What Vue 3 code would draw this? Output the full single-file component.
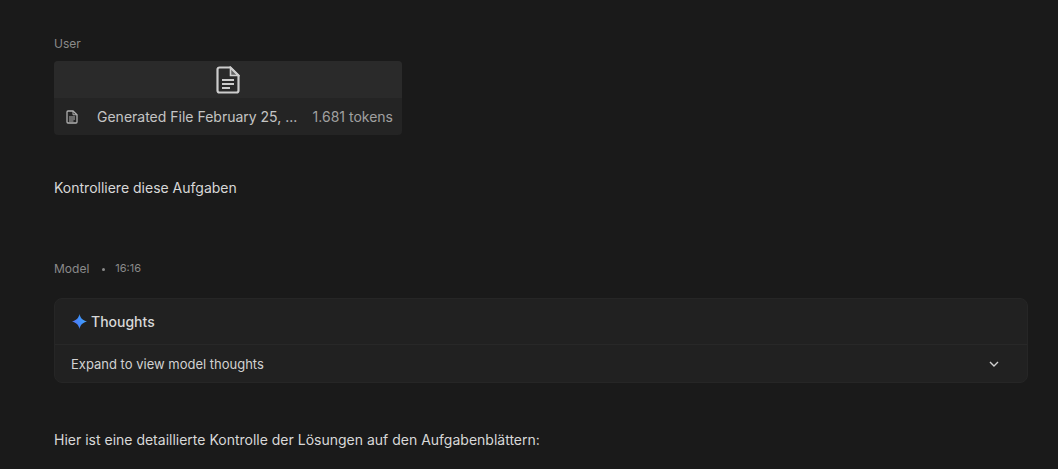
<template>
  <div class="page">
    <section class="turn user-turn">
      <div class="author"><span>User</span></div>
      <div class="file-card">
        <div class="file-preview">
          <svg class="doc-large" viewBox="0 0 24 28" fill="none" stroke="currentColor" stroke-width="2.2">
            <path d="M4 1.500h10.500L22.500 9.500v15a2 2 0 0 1-2 2H3.500a2 2 0 0 1-2-2v-21a2 2 0 0 1 2-2z" />
            <path d="M14.500 1.500v8h8z" fill="currentColor" fill-opacity="0.35" stroke-width="1.600" />
            <path d="M6 14h12M6 18h12M6 22h8" stroke-width="1.800" />
          </svg>
        </div>
        <div class="file-info">
          <svg class="doc-small" viewBox="0 0 24 28" fill="none" stroke="currentColor" stroke-width="2.600">
            <path d="M4 2h10l8 7.500V24a2 2 0 0 1-2 2H4a2 2 0 0 1-2-2V4a2 2 0 0 1 2-2z" />
            <path d="M14 2v7.500h8" stroke-width="2" />
            <path d="M6 14h12M6 18h12M6 22h9" stroke-width="2.400" />
          </svg>
          <span class="file-name">Generated File February 25, ...</span>
          <span class="file-tokens">1.681 tokens</span>
        </div>
      </div>
      <p class="message prompt">Kontrolliere diese Aufgaben</p>
    </section>

    <section class="turn model-turn">
      <div class="author">
        <span>Model</span>
        <span class="dot"></span>
        <span class="time">16:16</span>
      </div>
      <div class="thoughts">
        <div class="thoughts-head">
          <svg class="spark" viewBox="0 0 16 16">
            <defs>
              <linearGradient id="spark-fill" x1="0" y1="0.700" x2="1" y2="0.300">
                <stop offset="0" stop-color="#5a6ff2" />
                <stop offset="0.550" stop-color="#3f8ffb" />
                <stop offset="1" stop-color="#4aa8f8" />
              </linearGradient>
            </defs>
            <path d="M8 0c.9 4.200 2.900 6.400 8 8-5.100 1.600-7.100 3.800-8 8-.9-4.200-2.900-6.400-8-8 5.100-1.600 7.100-3.800 8-8z" fill="url(#spark-fill)" />
          </svg>
          <span>Thoughts</span>
        </div>
        <div class="thoughts-body">
          <span>Expand to view model thoughts</span>
          <svg class="chevron" viewBox="0 0 10 6" fill="none" stroke="currentColor" stroke-width="1.400">
            <path d="M1 1l4 4 4-4" />
          </svg>
        </div>
      </div>
      <p class="message answer">Hier ist eine detaillierte Kontrolle der Lösungen auf den Aufgabenblättern:</p>
    </section>
  </div>
</template>

<script setup>
</script>

<style>
html, body {
  margin: 0;
  background: #1a1a1a;
  overflow: hidden;
}
</style>

<style scoped>
.page {
  box-sizing: border-box;
  height: 469px;
  padding: 36px 30px 0 54px;
  background: #1a1a1a;
  color: #d8d8d8;
  font-family: Inter, "Noto Sans", sans-serif;
  overflow: hidden;
}

.author {
  display: flex;
  align-items: center;
  height: 15px;
  font-size: 12px;
  line-height: 15px;
  color: #8a8a8a;
}

.dot {
  width: 3px;
  height: 3px;
  margin: 1px 10px 0 13px;
  border-radius: 50%;
  background: #8a8a8a;
}

.time {
  font-size: 11px;
}

.file-card {
  width: 348px;
  height: 74px;
  margin-top: 10px;
  border-radius: 4px;
  overflow: hidden;
  background: #242424;
}

.file-preview {
  display: flex;
  justify-content: center;
  align-items: center;
  height: 37px;
  background: #2a2a2a;
  color: #cdcdcd;
}

.doc-large {
  width: 24px;
  height: 28px;
}

.file-info {
  display: flex;
  align-items: center;
  height: 37px;
  padding: 0 9px 0 12px;
  font-size: 14px;
  color: #c4c4c4;
}

.doc-small {
  flex: none;
  width: 12px;
  height: 14px;
  color: #b0b0b0;
}

.file-name {
  flex: 1;
  margin-left: 19px;
  white-space: nowrap;
}

.file-tokens {
  color: #a0a0a0;
  margin-top: -1px;
}

.message {
  margin: 0;
  font-size: 14px;
  line-height: 20px;
  color: #d8d8d8;
}

.prompt {
  margin-top: 43px;
}

.model-turn {
  margin-top: 63px;
}

.thoughts {
  box-sizing: border-box;
  height: 85px;
  margin-top: 22px;
  border: 1px solid #262626;
  border-radius: 8px;
  background: #212121;
}

.thoughts-head {
  display: flex;
  align-items: center;
  height: 46px;
  padding-left: 17px;
  border-bottom: 1px solid #282828;
  font-size: 14px;
  font-weight: 500;
  color: #d8d8d8;
  box-sizing: border-box;
}

.spark {
  width: 15px;
  height: 15px;
  margin-right: 4px;
}

.thoughts-body {
  display: flex;
  justify-content: space-between;
  align-items: center;
  height: 37px;
  padding: 0 28px 0 16px;
  font-size: 13px;
  color: #d2d2d2;
}

.chevron {
  width: 10px;
  height: 6px;
  color: #d0d0d0;
}

.answer {
  margin-top: 47px;
}
</style>
